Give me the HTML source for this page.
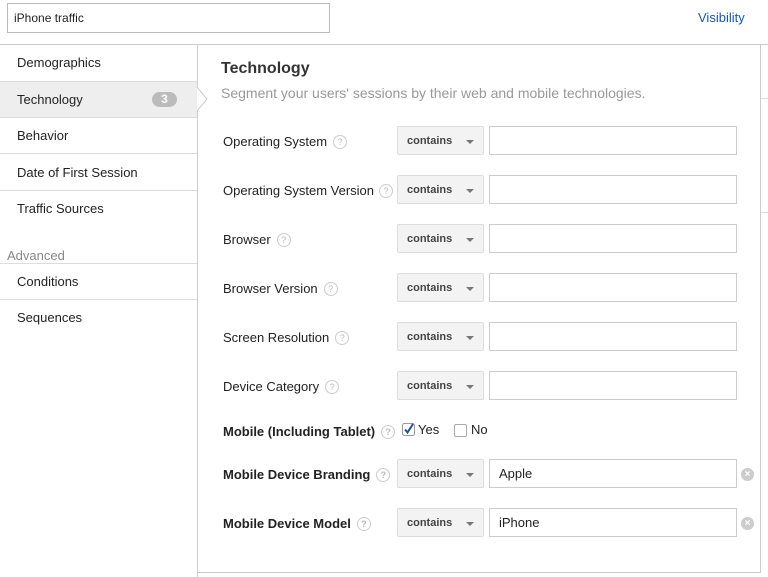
<!DOCTYPE html><html><head><style>
body{margin:0;width:768px;height:577px;background:#fff;font-family:"Liberation Sans",Arial,sans-serif;color:#222;position:relative;overflow:hidden}
.a{position:absolute}
.nav{font-size:13px;left:17px}
.hl{height:1px;background:#ddd;left:0;width:197px}
.lbl{font-size:13px;left:223px}
.q{display:inline-block;width:12px;height:12px;border:1px solid #ccc;border-radius:50%;color:#bbb;font-size:9px;text-align:center;line-height:12px;vertical-align:1px;margin-left:6px}
.dd{left:397px;width:85px;height:27px;background:#f3f3f3;border:1px solid #ddd;border-radius:2px;font-size:11px;font-weight:bold;color:#444;display:flex;align-items:center}
.dd span{margin-left:9px}
.dd i{position:absolute;right:9px;top:13px;border:4px solid transparent;border-top:4px solid #777;border-bottom:0}
.in{left:489px;width:248px;height:29px;border:1px solid #ccc;font-size:13px;padding-left:9px;box-sizing:border-box;display:flex;align-items:center}
.x{left:741px;width:13px;height:13px;border-radius:50%;background:#ccc;color:#fff;font-size:10px;text-align:center;line-height:13px;font-weight:bold}
</style></head><body>
<div class="a" style="left:7px;top:3px;width:315px;height:28px;border:1px solid #bbb;font-size:12px;line-height:28px;padding-left:6px">iPhone traffic</div>
<div class="a" style="left:698px;top:10px;font-size:13px;color:#15c">Visibility</div>
<div class="a" style="left:0;top:44px;width:768px;height:1px;background:#ccc"></div>
<div class="a" style="left:197px;top:44px;width:1px;height:533px;background:#ccc"></div>
<div class="a" style="left:760px;top:44px;width:1px;height:529px;background:#ccc"></div>
<div class="a" style="left:197px;top:572px;width:564px;height:1px;background:#ccc"></div>
<div class="a" style="left:761px;top:98px;width:7px;height:1px;background:#ddd"></div>
<div class="a" style="left:761px;top:212px;width:7px;height:1px;background:#ddd"></div>
<div class="a" style="left:0;top:82px;width:197px;height:35px;background:#eee"></div>
<svg class="a" style="left:196px;top:87px" width="12" height="24"><path d="M1 0 L11 12 L1 24" fill="#fff" stroke="#ccc"/></svg>
<div class="a hl" style="top:81px"></div><div class="a hl" style="top:117px"></div><div class="a hl" style="top:153px"></div><div class="a hl" style="top:190px"></div><div class="a hl" style="top:263px"></div><div class="a hl" style="top:299px"></div>
<div class="a nav" style="top:55px">Demographics</div>
<div class="a nav" style="top:92px">Technology</div>
<div class="a" style="left:152px;top:92px;width:25px;height:15px;border-radius:8px;background:#bbb;color:#fff;font-size:12px;font-weight:bold;text-align:center;line-height:15px">3</div>
<div class="a nav" style="top:128px">Behavior</div>
<div class="a nav" style="top:165px">Date of First Session</div>
<div class="a nav" style="top:201px">Traffic Sources</div>
<div class="a" style="left:7px;top:248px;font-size:13px;color:#888">Advanced</div>
<div class="a nav" style="top:274px">Conditions</div>
<div class="a nav" style="top:310px">Sequences</div>
<div class="a" style="left:221px;top:60px;font-size:16px;font-weight:bold;color:#333">Technology</div>
<div class="a" style="left:221px;top:85px;font-size:14px;color:#999">Segment your users' sessions by their web and mobile technologies.</div>

<div class="a lbl" style="top:134px">Operating System<span class="q">?</span></div>
<div class="a dd" style="top:126px"><span>contains</span><i></i></div><div class="a in" style="top:126px"></div>
<div class="a lbl" style="top:183px">Operating System Version<span class="q" style="margin-left:5px">?</span></div>
<div class="a dd" style="top:175px"><span>contains</span><i></i></div><div class="a in" style="top:175px"></div>
<div class="a lbl" style="top:232px">Browser<span class="q">?</span></div>
<div class="a dd" style="top:224px"><span>contains</span><i></i></div><div class="a in" style="top:224px"></div>
<div class="a lbl" style="top:281px">Browser Version<span class="q">?</span></div>
<div class="a dd" style="top:273px"><span>contains</span><i></i></div><div class="a in" style="top:273px"></div>
<div class="a lbl" style="top:330px">Screen Resolution<span class="q">?</span></div>
<div class="a dd" style="top:322px"><span>contains</span><i></i></div><div class="a in" style="top:322px"></div>
<div class="a lbl" style="top:379px">Device Category<span class="q">?</span></div>
<div class="a dd" style="top:371px"><span>contains</span><i></i></div><div class="a in" style="top:371px"></div>

<div class="a lbl" style="top:424px;font-weight:bold">Mobile (Including Tablet)<span class="q">?</span></div>
<svg class="a" style="left:402px;top:423px" width="13" height="13"><rect x=".5" y=".5" width="12" height="12" rx="2" fill="#fff" stroke="#999"/><path d="M3 6.5 L5.5 9.5 L11 1" fill="none" stroke="#1a4f9c" stroke-width="2"/></svg>
<div class="a" style="left:418px;top:422px;font-size:13px">Yes</div>
<div class="a" style="left:454px;top:424px;width:11px;height:11px;border:1px solid #aaa;border-radius:2px"></div>
<div class="a" style="left:471px;top:422px;font-size:13px">No</div>

<div class="a lbl" style="top:467px;font-weight:bold">Mobile Device Branding<span class="q">?</span></div>
<div class="a dd" style="top:459px"><span>contains</span><i></i></div><div class="a in" style="top:459px">Apple</div>
<div class="a x" style="top:468px">×</div>
<div class="a lbl" style="top:516px;font-weight:bold">Mobile Device Model<span class="q">?</span></div>
<div class="a dd" style="top:508px"><span>contains</span><i></i></div><div class="a in" style="top:508px">iPhone</div>
<div class="a x" style="top:517px">×</div>
</body></html>
